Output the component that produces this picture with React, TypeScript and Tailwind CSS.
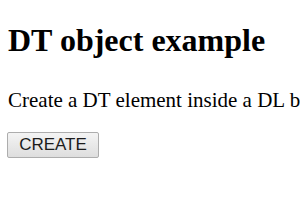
// DT object example — demo page with heading, blurb and a create button.

export default function App() {
  return (
    <div className="w-[300px] h-[210px] overflow-hidden bg-white pl-2 text-black font-['Liberation_Serif',serif]">
      <h1 className="mt-[22px] text-[32px] leading-[37px] font-bold">DT object example</h1>
      <p className="mt-[29px] text-[21px] leading-[24px] whitespace-nowrap">
        Create a DT element inside a DL by clicking the button below.
      </p>
      <button
        type="button"
        className="mt-[20px] -ml-px flex h-[26px] w-[92px] items-center justify-center rounded-[2px] border border-[#adadad] bg-gradient-to-b from-[#f4f4f4] to-[#dedede] font-['Liberation_Sans',Arial,sans-serif] text-[17px] text-[#1c1c1c]"
      >
        CREATE
      </button>
    </div>
  );
}
